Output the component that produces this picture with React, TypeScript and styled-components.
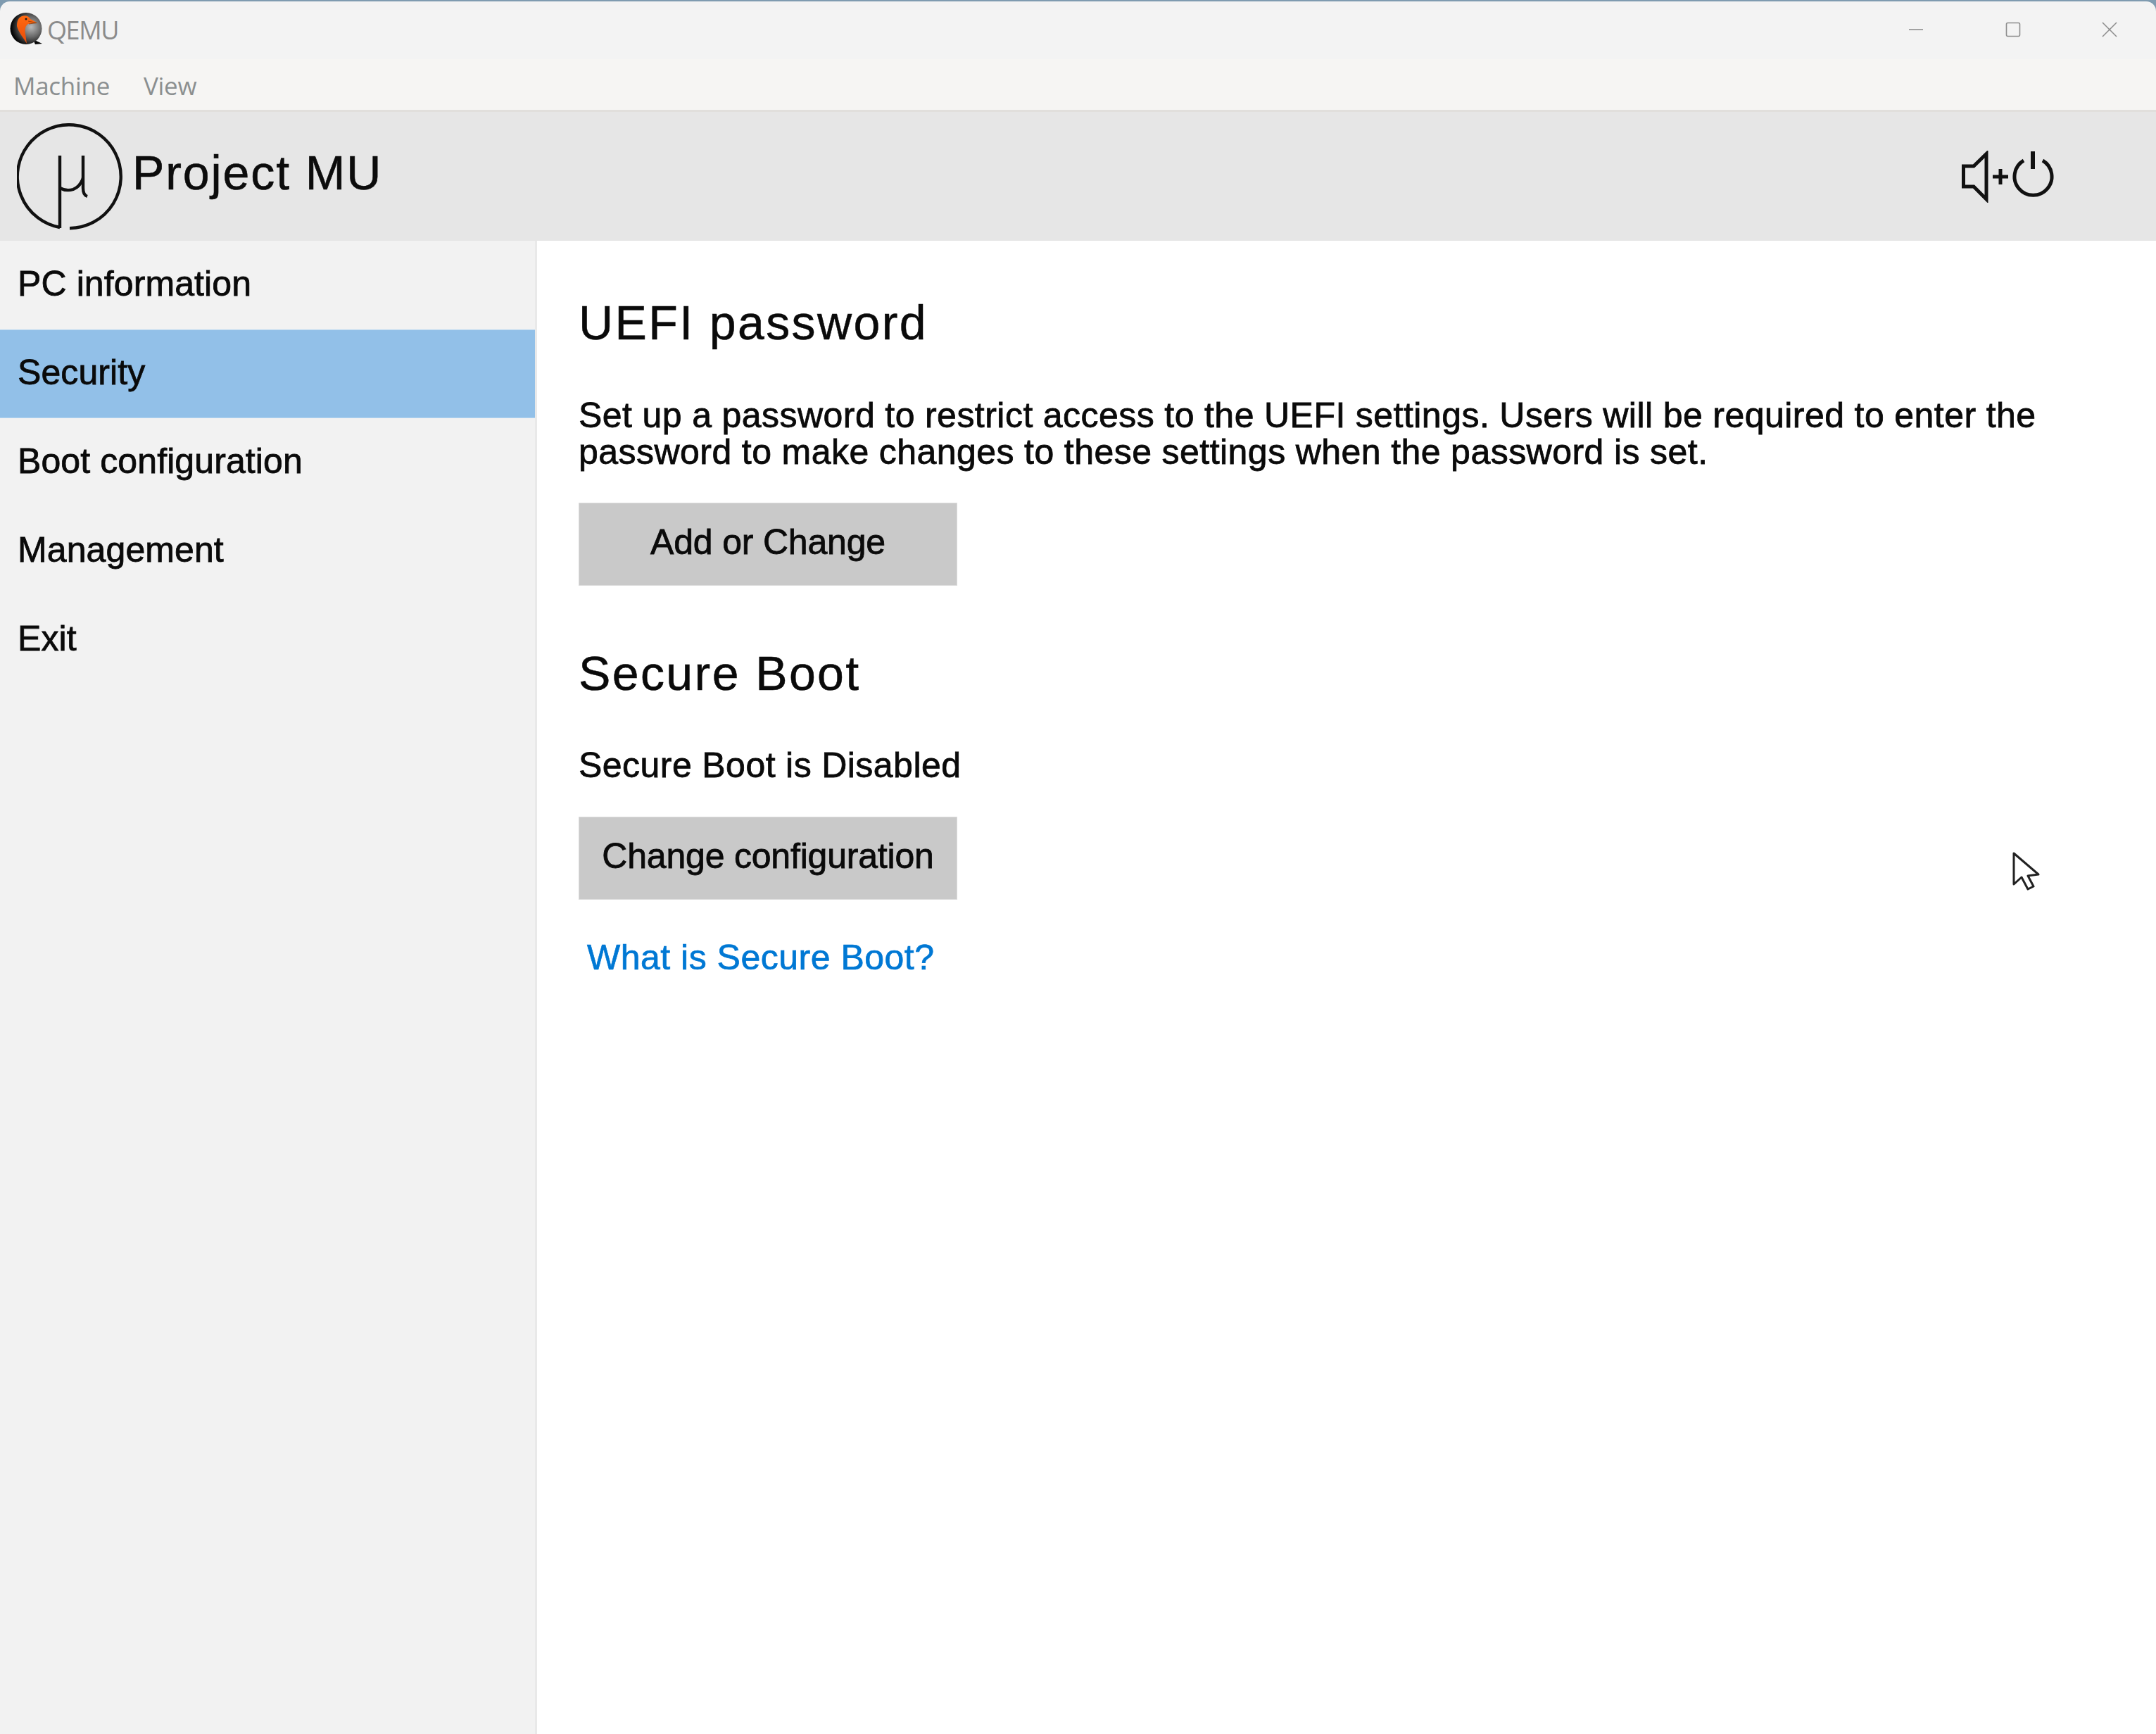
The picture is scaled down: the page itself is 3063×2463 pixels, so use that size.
import React from "react";
import styled, { createGlobalStyle } from "styled-components";

const Global = createGlobalStyle`
  html, body { margin: 0; padding: 0; background: #7f9bb0; }
  #root { width: 3063px; height: 2463px; overflow: hidden; }
`;

const Window = styled.div`
  width: 3063px;
  height: 2463px;
  box-sizing: border-box;
  padding-top: 2px;
  display: flex;
  flex-direction: column;
`;

const TitleBar = styled.div`
  height: 82px;
  flex: none;
  background: #f3f3f3;
  border-radius: 14px 14px 0 0;
  display: flex;
  align-items: flex-start;
  padding: 16px 0 0 14px;
  box-sizing: border-box;
  position: relative;
`;

const TitleText = styled.span`
  font: 36px/44px "Open Sans", "Noto Sans", sans-serif;
  color: #8b8b8b;
  margin: 3px 0 0 5px;
  letter-spacing: -1.4px;
`;

const WindowButtons = styled.div`
  margin-left: auto;
  display: flex;
  padding: 13px 55px 0 0;
  gap: 115.5px;
`;

const MenuBar = styled.div`
  height: 75px;
  flex: none;
  box-sizing: border-box;
  background: #f6f5f3;
  border-bottom: 3px solid #e1dfdc;
  display: flex;
  gap: 48px;
  padding: 3px 0 0 19px;
  align-items: center;
`;

const MenuItem = styled.span`
  font: 35px/44px "Open Sans", "Noto Sans", sans-serif;
  color: #8b8f90;
  letter-spacing: -0.3px;
`;

const Header = styled.div`
  height: 183px;
  flex: none;
  background: #e6e6e6;
  display: flex;
  align-items: center;
  padding: 0 144px 0 24px;
  box-sizing: border-box;
`;

const Brand = styled.h1`
  font: 400 68px/80px "Liberation Sans", Arial, sans-serif;
  letter-spacing: 1.9px;
  color: #0c0c0c;
  margin: -12px 0 0 12px;
  -webkit-text-stroke: 0.6px #0c0c0c;
`;

const Power = styled.div`
  margin-left: auto;
  display: flex;
`;

const Body = styled.div`
  flex: 1;
  display: grid;
  grid-template-columns: 763px 1fr;
  min-height: 0;
`;

const Sidebar = styled.nav`
  background: #f2f2f2;
  border-right: 3px solid #e9e9e9;
  box-sizing: border-box;
  display: flex;
  flex-direction: column;
`;

const NavItem = styled.div<{ $active?: boolean }>`
  height: 126px;
  box-sizing: border-box;
  padding: 0 0 4px 25px;
  display: flex;
  align-items: center;
  font: 50px/60px "Liberation Sans", Arial, sans-serif;
  letter-spacing: 0.1px;
  color: #0a0a0a;
  -webkit-text-stroke: 0.8px #0a0a0a;
  background: ${(p) => (p.$active ? "#92c0e8" : "transparent")};
  box-shadow: ${(p) => (p.$active ? "inset 0 1px 0 #b5d5f0, inset 0 -1px 0 #b5d5f0" : "none")};
`;

const Main = styled.main`
  background: #fff;
  padding: 76px 0 0 59px;
  position: relative;
`;

const Heading = styled.h2<{ $gap: number }>`
  font: 400 68px/80px "Liberation Sans", Arial, sans-serif;
  letter-spacing: 2.4px;
  color: #0a0a0a;
  margin: 0 0 ${(p) => p.$gap}px 0;
  -webkit-text-stroke: 0.5px #0a0a0a;
`;

const Text = styled.p<{ $gap: number }>`
  font: 50px/51.5px "Liberation Sans", Arial, sans-serif;
  letter-spacing: 0.47px;
  word-spacing: -0.3px;
  color: #0a0a0a;
  margin: 0 0 ${(p) => p.$gap}px 0;
  width: 2150px;
  -webkit-text-stroke: 0.8px #0a0a0a;
`;

const Button = styled.div<{ $gap: number }>`
  width: 538px;
  height: 118px;
  box-sizing: border-box;
  background: #c9c9c9;
  border: 1px solid #dcdcdc;
  display: flex;
  align-items: center;
  justify-content: center;
  padding-bottom: 6px;
  font: 50px/60px "Liberation Sans", Arial, sans-serif;
  letter-spacing: -0.2px;
  color: #0a0a0a;
  -webkit-text-stroke: 0.8px #0a0a0a;
  margin-bottom: ${(p) => p.$gap}px;
`;

const LinkText = styled.a`
  display: block;
  margin-left: 12px;
  font: 50px/60px "Liberation Sans", Arial, sans-serif;
  letter-spacing: 0.5px;
  color: #0078d4;
  -webkit-text-stroke: 0.7px #0078d4;
`;

const Pointer = styled.svg`
  position: absolute;
  left: 2096px;
  top: 868px;
`;

const QemuIcon = () => (
  <svg width="48" height="46" viewBox="0 0 48 46">
    <defs>
      <radialGradient id="q" cx="0.66" cy="0.45" r="0.62">
        <stop offset="0" stopColor="#b9b9b9" />
        <stop offset="0.5" stopColor="#6a6a6a" />
        <stop offset="1" stopColor="#060606" />
      </radialGradient>
      <linearGradient id="o" x1="0" y1="0" x2="0" y2="1">
        <stop offset="0" stopColor="#ff6a10" />
        <stop offset="1" stopColor="#e84b0a" />
      </linearGradient>
    </defs>
    <path d="M33 38 L46 44 L36 45 Z" fill="#060606" />
    <circle cx="23" cy="22.5" r="22.5" fill="url(#q)" />
    <path
      d="M17 5 C22 3 27 5 29 9 L38 14 L26 16 C22 18 21 24 22 30 L24 44 C20 36 12 28 10 19 C10 12 12 7 17 5 Z"
      fill="url(#o)"
    />
    <path d="M26 12 L38 14.5 L27 16" fill="none" stroke="#8a3a08" strokeWidth="0.8" />
    <circle cx="23" cy="9" r="1.5" fill="#1a1a1a" />
  </svg>
);

const WindowIcon = ({ kind }: { kind: "min" | "max" | "close" }) => (
  <svg width="22" height="22" viewBox="0 0 22 22" fill="none" stroke="#8d8d8d" strokeWidth="1.6">
    {kind === "min" && <path d="M1 11 H21" />}
    {kind === "max" && <rect x="1.5" y="1.5" width="19" height="19" rx="2" />}
    {kind === "close" && <path d="M1 1 L21 21 M21 1 L1 21" />}
  </svg>
);

const LogoMark = () => (
  <svg width="152" height="152" viewBox="0 0 152 152" fill="none" stroke="#111" strokeWidth="4.4">
    <path d="M61 148 A73.5 73.5 0 1 1 75 149.2" />
    <path d="M61 46 V149" />
    <path d="M61 92 Q70 97 80 94 Q90 90 94 78" />
    <path d="M94 46 V92 Q94 102 100 104" />
  </svg>
);

const PowerIcon = () => (
  <svg width="132" height="74" viewBox="0 0 132 74" fill="none" stroke="#111" strokeWidth="5">
    <path d="M2.5 22 H17 L35 4.5 V69 L17 51 H2.5 Z" strokeLinejoin="miter" />
    <path d="M44 37 H66 M55 26 V48" />
    <path d="M88 14 A26.5 26.5 0 1 0 115 14" />
    <path d="M101 1 V26" strokeWidth="6" />
  </svg>
);

export default function App() {
  return (
    <>
      <Global />
      <Window>
        <TitleBar>
          <QemuIcon />
          <TitleText>QEMU</TitleText>
          <WindowButtons>
            <WindowIcon kind="min" />
            <WindowIcon kind="max" />
            <WindowIcon kind="close" />
          </WindowButtons>
        </TitleBar>
        <MenuBar>
          <MenuItem>Machine</MenuItem>
          <MenuItem>View</MenuItem>
        </MenuBar>
        <Header>
          <LogoMark />
          <Brand>Project MU</Brand>
          <Power>
            <PowerIcon />
          </Power>
        </Header>
        <Body>
          <Sidebar>
            <NavItem>PC information</NavItem>
            <NavItem $active>Security</NavItem>
            <NavItem>Boot configuration</NavItem>
            <NavItem>Management</NavItem>
            <NavItem>Exit</NavItem>
          </Sidebar>
          <Main>
            <Heading $gap={67}>UEFI password</Heading>
            <Text $gap={46}>
              Set up a password to restrict access to the UEFI settings. Users will be required to enter the password
              to make changes to these settings when the password is set.
            </Text>
            <Button $gap={84}>Add or Change</Button>
            <Heading $gap={66}>Secure Boot</Heading>
            <Text $gap={46}>Secure Boot is Disabled</Text>
            <Button $gap={52}>Change configuration</Button>
            <LinkText>What is Secure Boot?</LinkText>
            <Pointer width="40" height="56" viewBox="0 0 40 56" fill="#fff" stroke="#222" strokeWidth="3">
              <path d="M2 2 V46 L13 36 L22 53 L30 49 L22 34 L37 32 Z" strokeLinejoin="round" />
            </Pointer>
          </Main>
        </Body>
      </Window>
    </>
  );
}
